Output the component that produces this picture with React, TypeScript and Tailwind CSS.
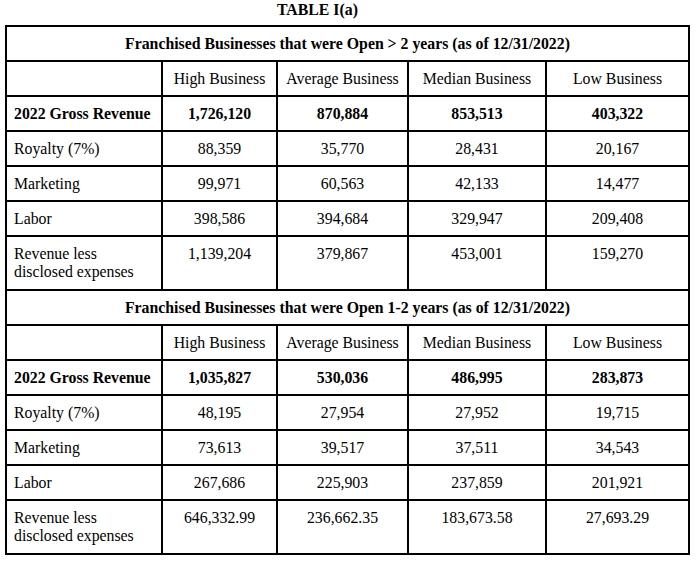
import React from "react";

type Row = { label: string[]; values: string[]; bold?: boolean; tall?: boolean };

const sections: { title: string; rows: Row[] }[] = [
  {
    title: "Franchised Businesses that were Open > 2 years (as of 12/31/2022)",
    rows: [
      { label: ["2022 Gross Revenue"], values: ["1,726,120", "870,884", "853,513", "403,322"], bold: true },
      { label: ["Royalty (7%)"], values: ["88,359", "35,770", "28,431", "20,167"] },
      { label: ["Marketing"], values: ["99,971", "60,563", "42,133", "14,477"] },
      { label: ["Labor"], values: ["398,586", "394,684", "329,947", "209,408"] },
      { label: ["Revenue less", "disclosed expenses"], values: ["1,139,204", "379,867", "453,001", "159,270"], tall: true },
    ],
  },
  {
    title: "Franchised Businesses that were Open 1-2 years (as of 12/31/2022)",
    rows: [
      { label: ["2022 Gross Revenue"], values: ["1,035,827", "530,036", "486,995", "283,873"], bold: true },
      { label: ["Royalty (7%)"], values: ["48,195", "27,954", "27,952", "19,715"] },
      { label: ["Marketing"], values: ["73,613", "39,517", "37,511", "34,543"] },
      { label: ["Labor"], values: ["267,686", "225,903", "237,859", "201,921"] },
      { label: ["Revenue less", "disclosed expenses"], values: ["646,332.99", "236,662.35", "183,673.58", "27,693.29"], tall: true },
    ],
  },
];

const headers = ["High Business", "Average Business", "Median Business", "Low Business"];

export default function App() {
  return (
    <div
      className="w-[698px] h-[566px] bg-white text-black text-[15.8px] leading-[18px]"
      style={{ fontFamily: '"Liberation Serif", "Times New Roman", serif' }}
    >
      <div className="h-[25px] pl-[277px] pt-[1px] font-bold">TABLE I(a)</div>
      <div className="ml-[5px] w-[685px] bg-black p-[2px] grid grid-cols-[154px_113px_129px_136px_141px] gap-[2px]">
        {sections.map((s, si) => (
          <React.Fragment key={si}>
            <div className="col-span-5 bg-white h-[33px] pt-[8px] text-center font-bold">{s.title}</div>
            <div className="bg-white h-[33px]" />
            {headers.map((h) => (
              <div key={h} className="bg-white h-[33px] pt-[8px] text-center">
                {h}
              </div>
            ))}
            {s.rows.map((r, ri) => (
              <React.Fragment key={ri}>
                <div className={`bg-white pt-[8px] pl-[7px] ${r.tall ? "h-[52px]" : "h-[33px]"} ${r.bold ? "font-bold" : ""}`}>
                  {r.label.map((l) => (
                    <div key={l}>{l}</div>
                  ))}
                </div>
                {r.values.map((v, vi) => (
                  <div
                    key={vi}
                    className={`bg-white pt-[8px] text-center ${r.tall ? "h-[52px]" : "h-[33px]"} ${r.bold ? "font-bold" : ""}`}
                  >
                    {v}
                  </div>
                ))}
              </React.Fragment>
            ))}
          </React.Fragment>
        ))}
      </div>
    </div>
  );
}
